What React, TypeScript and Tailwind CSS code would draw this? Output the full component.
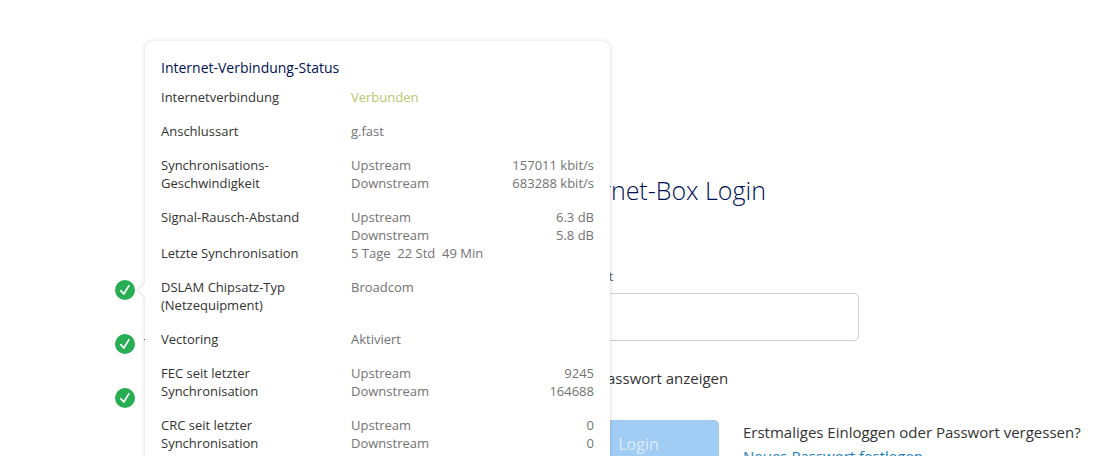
import React from "react";

type Detail = { name?: string; value: string };
type Row = { label: string[]; details: Detail[]; tone?: "ok"; tight?: boolean };

const rows: Row[] = [
  { label: ["Internetverbindung"], details: [{ value: "Verbunden" }], tone: "ok" },
  { label: ["Anschlussart"], details: [{ value: "g.fast" }] },
  {
    label: ["Synchronisations-", "Geschwindigkeit"],
    details: [
      { name: "Upstream", value: "157011 kbit/s" },
      { name: "Downstream", value: "683288 kbit/s" },
    ],
  },
  {
    label: ["Signal-Rausch-Abstand"],
    details: [
      { name: "Upstream", value: "6.3 dB" },
      { name: "Downstream", value: "5.8 dB" },
    ],
    tight: true,
  },
  { label: ["Letzte Synchronisation"], details: [{ value: "5 Tage  22 Std  49 Min" }] },
  { label: ["DSLAM Chipsatz-Typ", "(Netzequipment)"], details: [{ value: "Broadcom" }] },
  { label: ["Vectoring"], details: [{ value: "Aktiviert" }] },
  {
    label: ["FEC seit letzter", "Synchronisation"],
    details: [
      { name: "Upstream", value: "9245" },
      { name: "Downstream", value: "164688" },
    ],
  },
  {
    label: ["CRC seit letzter", "Synchronisation"],
    details: [
      { name: "Upstream", value: "0" },
      { name: "Downstream", value: "0" },
    ],
  },
];

function StatusDot() {
  return (
    <svg viewBox="0 0 20 20" className="size-5 shrink-0" aria-hidden="true">
      <circle cx="10" cy="10" r="10" fill="#27ae52" />
      <path
        d="M5.8 10.6 8.8 14 14 5.6"
        fill="none"
        stroke="#fff"
        strokeWidth="1.7"
        strokeLinecap="round"
        strokeLinejoin="round"
      />
    </svg>
  );
}

function StatusTable() {
  return (
    <table className="w-full table-fixed border-collapse text-[13px] leading-[18px]">
      <colgroup>
        <col className="w-[190px]" />
        <col className="w-[100px]" />
        <col />
      </colgroup>
      <tbody>
        {rows.map((row) =>
          row.details.map((detail, i) => {
            const last = i === row.details.length - 1;
            const pad = last && !row.tight ? "pb-4" : "pb-0";
            return (
              <tr key={row.label[0] + i} className="align-top">
                {i === 0 && (
                  <th
                    scope="row"
                    rowSpan={row.details.length}
                    className={`p-0 text-left font-normal text-[#333333] ${row.tight ? "pb-0" : "pb-4"}`}
                  >
                    {row.label.map((line) => (
                      <span key={line} className="block">
                        {line}
                      </span>
                    ))}
                  </th>
                )}
                {detail.name ? (
                  <>
                    <td className={`p-0 text-[#737373] ${pad}`}>{detail.name}</td>
                    <td className={`p-0 text-right text-[#737373] ${pad}`}>{detail.value}</td>
                  </>
                ) : (
                  <td
                    colSpan={2}
                    className={`p-0 whitespace-pre ${row.tone === "ok" ? "text-[#b5c96c]" : "text-[#737373]"} ${pad}`}
                  >
                    {detail.value}
                  </td>
                )}
              </tr>
            );
          }),
        )}
      </tbody>
    </table>
  );
}

function StatusPopover() {
  return (
    <div
      role="dialog"
      aria-labelledby="status-title"
      className="absolute -top-[239px] left-[30px] z-10 w-[465px] rounded-lg bg-white p-4 shadow-[0_0_4px_rgba(0,0,0,0.16)]"
    >
      <div className="absolute top-[243px] -left-[6px] size-3 rotate-45 border-b border-l border-[#e4e4e4] bg-white" />
      <h2 id="status-title" className="mb-[10px] text-sm leading-[21px] text-[#001155]">
        Internet-Verbindung-Status
      </h2>
      <StatusTable />
    </div>
  );
}

export default function App() {
  return (
    <div className="flex h-screen overflow-hidden bg-white pl-[115px] font-['Open_Sans','Noto_Sans',sans-serif] text-[#333333]">
      <aside className="w-[443px] shrink-0 pt-[280px]">
        <ul className="flex flex-col gap-[34px] text-sm leading-5">
          <li className="relative flex gap-[9px]">
            <StatusDot />
            <StatusPopover />
          </li>
          <li className="flex gap-[9px]">
            <StatusDot />
            <span>T</span>
          </li>
          <li>
            <StatusDot />
          </li>
        </ul>
      </aside>

      <main className="min-w-0 flex-1 pt-[172px]">
        <h1 className="text-[25px] leading-9 font-light text-[#001155]">Internet-Box Login</h1>
        <form className="mt-[58px]" onSubmit={(e) => e.preventDefault()}>
          <label htmlFor="password" className="block text-[13px] leading-5 text-[#666666]">
            Passwort
          </label>
          <input
            id="password"
            type="password"
            className="mt-[7px] block h-12 w-[301px] rounded-[5px] border border-[#d0d0d0] bg-white px-4"
          />
          <label className="mt-[26px] flex items-center gap-5 text-[15px] leading-[22px]">
            <input type="checkbox" className="size-5" />
            Passwort anzeigen
          </label>
          <div className="mt-[31px] flex items-start gap-6">
            <button
              type="submit"
              className="h-12 w-[161px] shrink-0 rounded-[5px] bg-[#a1cdf4] text-base text-[#d9ebfb]"
            >
              Login
            </button>
            <p className="text-[15px] leading-6 whitespace-nowrap">
              Erstmaliges Einloggen oder Passwort vergessen?
              <br />
              <a href="#reset" className="text-[#1781c4]">
                Neues Passwort festlegen
              </a>
            </p>
          </div>
        </form>
      </main>
    </div>
  );
}
